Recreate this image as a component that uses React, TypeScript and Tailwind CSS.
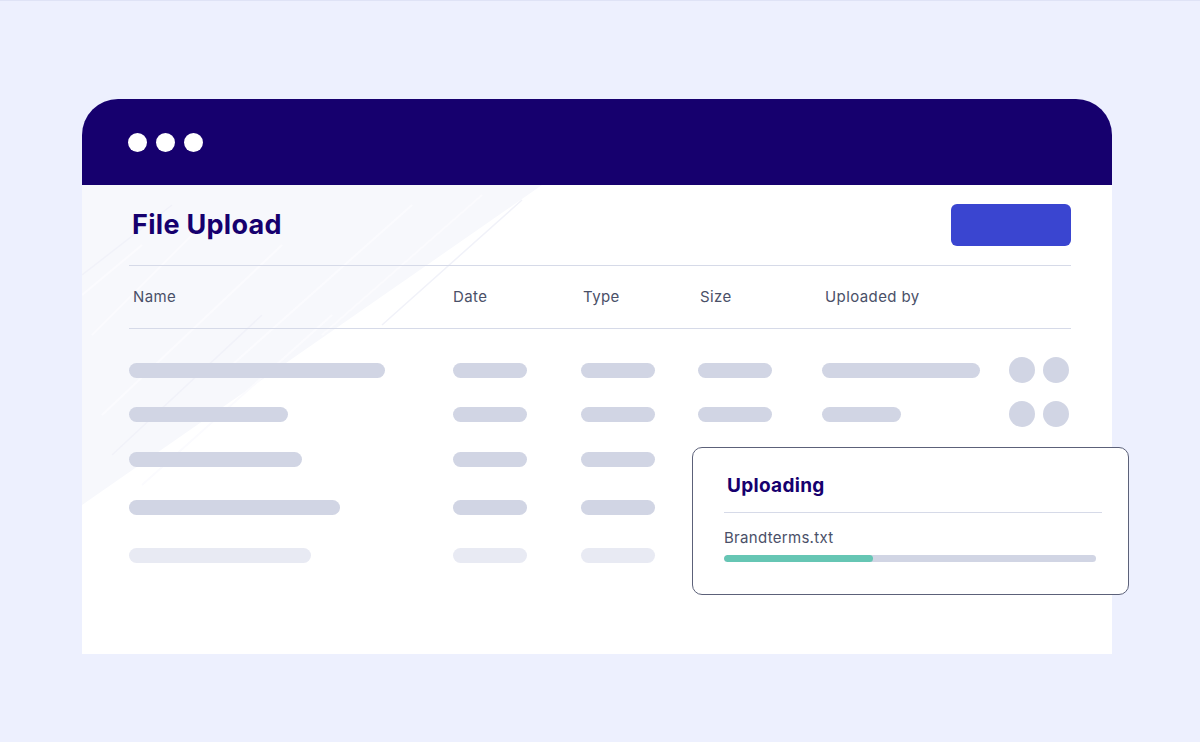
import React from "react";

const font = { fontFamily: "Inter, 'Noto Sans', sans-serif" };

type Row = {
  name: string;
  cells: Array<string | null>;
  circles: boolean;
  faded?: boolean;
  gap: string;
};

const rows: Row[] = [
  { name: "w-[256px]", cells: ["w-[74px]", "w-[74px]", "w-[74px]", "w-[158px]"], circles: true, gap: "mt-0" },
  { name: "w-[159px]", cells: ["w-[74px]", "w-[74px]", "w-[74px]", "w-[79px]"], circles: true, gap: "mt-[18px]" },
  { name: "w-[173px]", cells: ["w-[74px]", "w-[74px]", null, null], circles: false, gap: "mt-[19px]" },
  { name: "w-[211px]", cells: ["w-[74px]", "w-[74px]", null, null], circles: false, gap: "mt-[22px]" },
  { name: "w-[182px]", cells: ["w-[74px]", "w-[74px]", null, null], circles: false, faded: true, gap: "mt-[22px]" },
];

const cols = "grid grid-cols-[324px_128px_117px_124px_187px_1fr] items-center";

function Brush() {
  return (
    <svg
      className="pointer-events-none absolute left-0 top-0"
      width="480"
      height="330"
      viewBox="0 0 480 330"
    >
      <polygon points="0,0 460,0 0,320" fill="#f7f8fc" />
      <g stroke="#fbfbfe" strokeWidth="2">
        <line x1="60" y1="60" x2="0" y2="110" />
        <line x1="120" y1="40" x2="10" y2="150" />
        <line x1="200" y1="60" x2="20" y2="230" />
        <line x1="330" y1="20" x2="150" y2="180" />
        <line x1="400" y1="10" x2="240" y2="150" />
        <line x1="250" y1="130" x2="60" y2="300" />
      </g>
      <g stroke="#f1f2f9" strokeWidth="1.5">
        <line x1="440" y1="15" x2="300" y2="140" />
        <line x1="180" y1="130" x2="30" y2="270" />
        <line x1="90" y1="20" x2="0" y2="90" />
      </g>
    </svg>
  );
}

export default function App() {
  return (
    <div
      className="min-h-screen border-t border-[#dfe3f6] bg-[#edf0fe] pl-[82px] pt-[98px]"
      style={font}
    >
      <div className="w-[1030px]">
        <div className="flex h-[86px] items-center gap-[9px] rounded-t-[36px] bg-[#16006e] pl-[46px]">
          <span className="h-[19px] w-[19px] rounded-full bg-white" />
          <span className="h-[19px] w-[19px] rounded-full bg-white" />
          <span className="h-[19px] w-[19px] rounded-full bg-white" />
        </div>

        <div className="relative h-[469px] bg-white pl-[47px] pr-[41px] pt-[19px]">
          <Brush />
          <div className="relative">
            <div className="flex h-[42px] items-center justify-between">
              <h1 className="pl-[3px] text-[27px] font-bold tracking-[0.3px] text-[#16006e]">File Upload</h1>
              <div className="h-[42px] w-[120px] rounded-[6px] bg-[#3a45d0]" />
            </div>

            <div className="mt-[19px] h-px bg-[#d6dae8]" />
            <div className={`${cols} h-[62px] text-[15px] tracking-[0.4px] text-[#4a5068]`}>
              <span className="pl-[4px]">Name</span>
              <span>Date</span>
              <span className="pl-[2px]">Type</span>
              <span className="pl-[2px]">Size</span>
              <span className="pl-[3px]">Uploaded by</span>
              <span />
            </div>
            <div className="h-px bg-[#d6dae8]" />

            <div className="pt-[28px]">
              {rows.map((row, i) => {
                const bar = row.faded ? "bg-[#e8eaf3]" : "bg-[#d1d5e4]";
                return (
                  <div key={i} className={`${cols} h-[26px] ${row.gap}`}>
                    <div className={`h-[15px] rounded-full ${bar} ${row.name}`} />
                    {row.cells.map((w, j) =>
                      w ? (
                        <div key={j} className={`h-[15px] rounded-full ${bar} ${w}`} />
                      ) : (
                        <div key={j} />
                      )
                    )}
                    {row.circles ? (
                      <div className="flex gap-[8px]">
                        <span className="h-[26px] w-[26px] rounded-full bg-[#d1d5e4]" />
                        <span className="h-[26px] w-[26px] rounded-full bg-[#d1d5e4]" />
                      </div>
                    ) : (
                      <div />
                    )}
                  </div>
                );
              })}
            </div>
          </div>

          <div className="absolute left-[610px] top-[262px] h-[148px] w-[437px] rounded-[10px] border border-[#5c6179] bg-white pl-[31px] pr-[26px] pt-[26px]">
            <h2 className="pl-[3px] text-[19px] font-bold leading-[24px] tracking-[0.3px] text-[#16006e]">Uploading</h2>
            <div className="mt-[14px] h-px bg-[#d6dae8]" />
            <p className="mt-[15px] text-[15px] leading-[20px] tracking-[0.3px] text-[#4a5068]">Brandterms.txt</p>
            <div className="mr-[6px] mt-[7px] h-[7px] overflow-hidden rounded-full bg-[#d1d5e4]">
              <div className="h-full rounded-full bg-[#66c6b4]" style={{ width: "40%" }} />
            </div>
          </div>
        </div>
      </div>
    </div>
  );
}
